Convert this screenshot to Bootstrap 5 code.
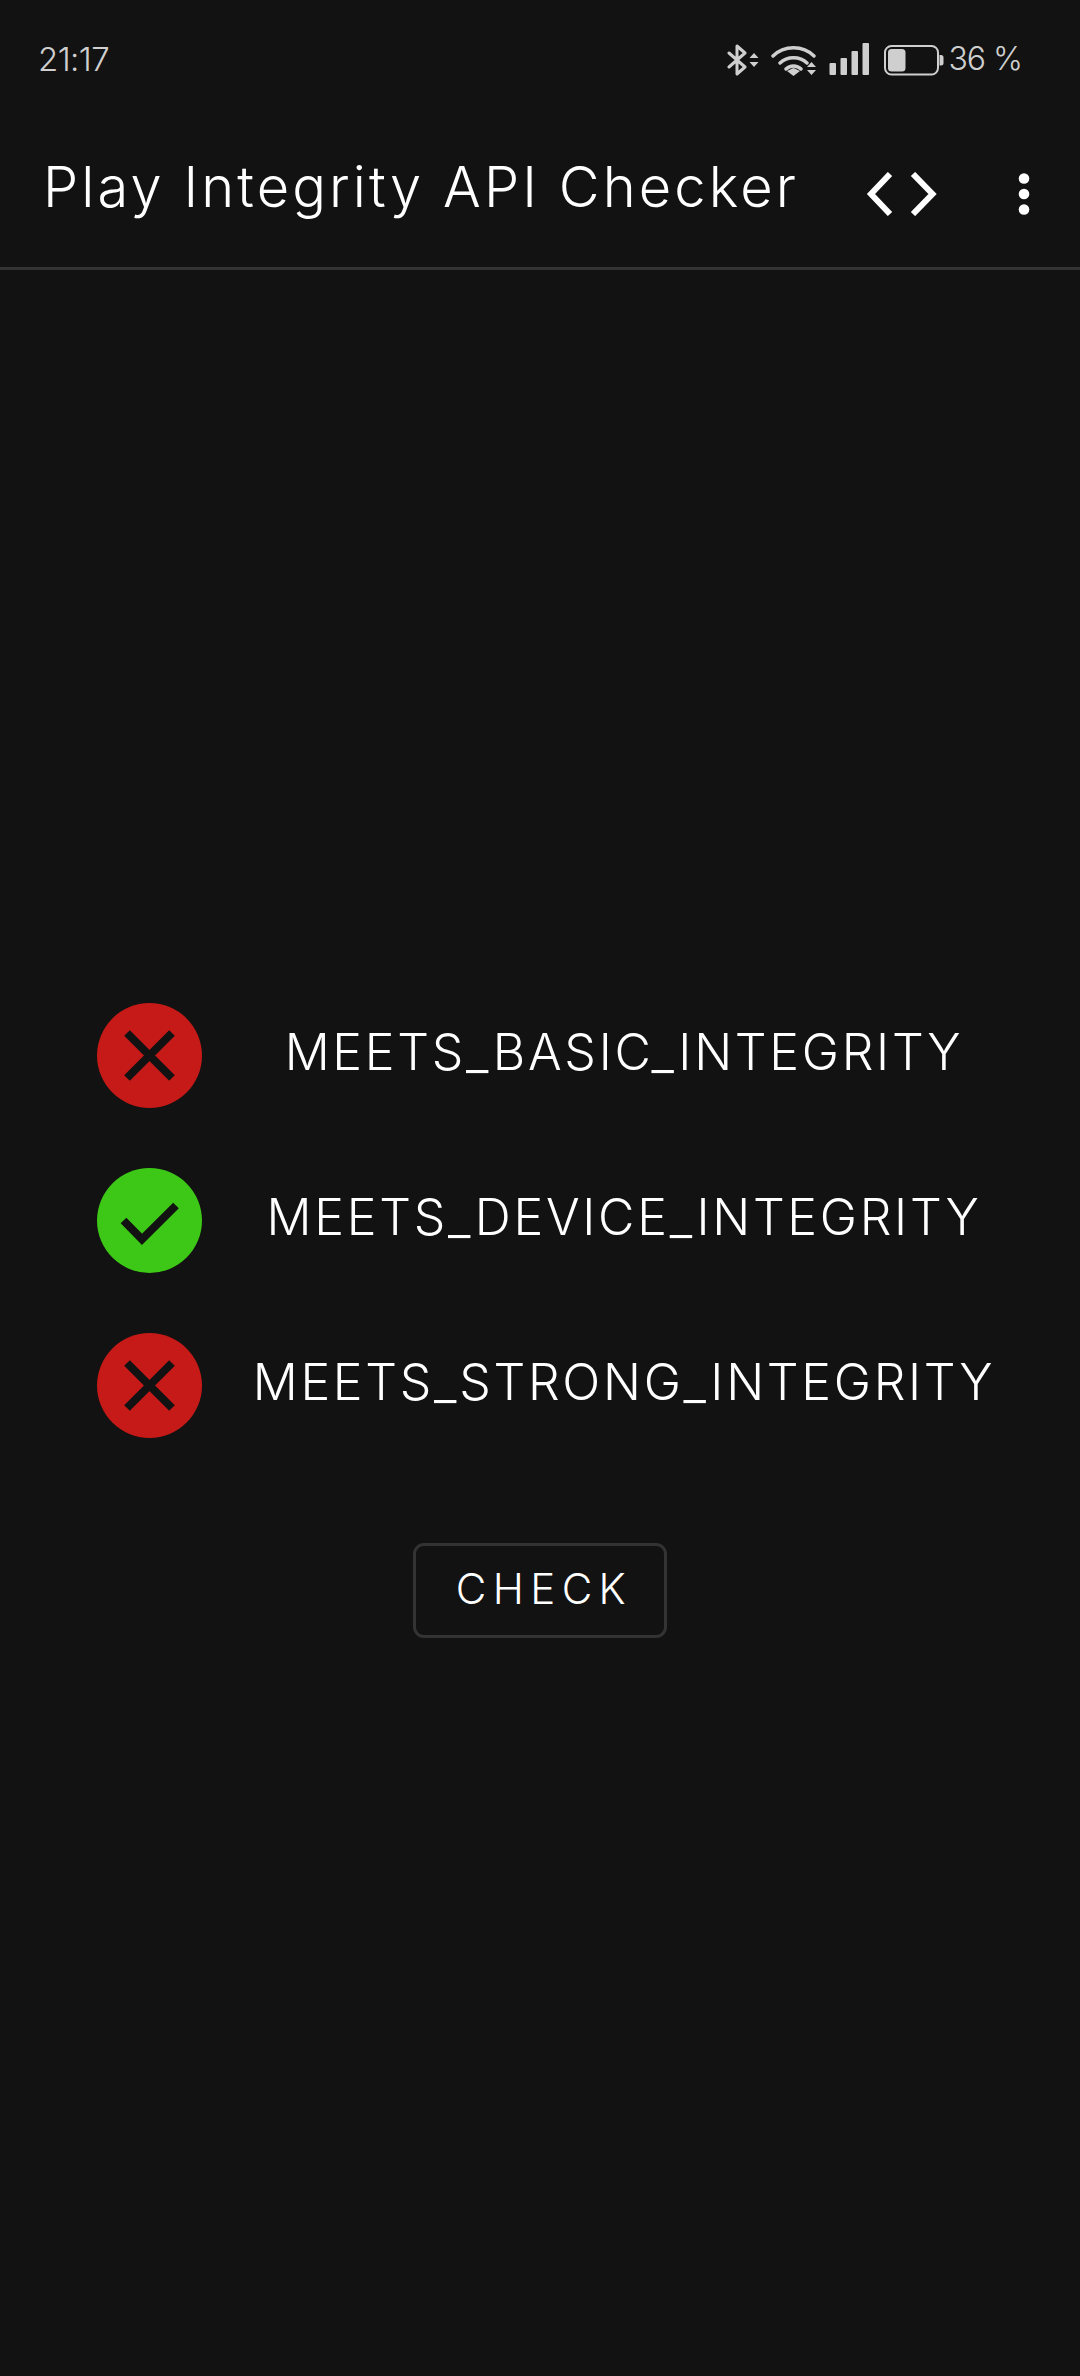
<!DOCTYPE html>
<html lang="en">
<head>
<meta charset="utf-8">
<title>Play Integrity API Checker</title>
<link href="https://cdn.jsdelivr.net/npm/bootstrap@5.3.0/dist/css/bootstrap.min.css" rel="stylesheet">
<style>
html, body { height: 100%; }
body { background: #121212; color: #fff; font-family: Inter, "Noto Sans", sans-serif; font-weight: 300; overflow: hidden; }
.shell { width: 1080px; height: 2376px; }
.statusbar { height: 117px; padding: 43px 58px 0 38px; color: #cfcfcf; }
.clock { font-size: 33px; line-height: 32px; letter-spacing: -.6px; }
.pct { font-size: 32px; line-height: 32px; margin-left: 4px; letter-spacing: -1px; }
.appbar { height: 153px; border-bottom: 3px solid #333; padding: 0 0 0 43px; }
.apptitle { font-size: 56px; line-height: 72px; font-weight: 350; margin: 0; letter-spacing: 3.1px; padding-bottom: 10px; flex-grow: 1; white-space: nowrap; }
.appicons { width: 215px; flex: none; padding-top: 3px; }
.content { padding: 733px 0 0 97px; }
.checkrow { height: 105px; margin-bottom: 60px; }
.roundicon { width: 105px; height: 105px; flex: none; display: block; }
.checklabel { width: 844px; font-size: 50px; font-weight: 350; line-height: 60px; text-align: center; padding-bottom: 8px; white-space: nowrap; letter-spacing: 2.7px; }
.checklabel span { display: inline-block; }
.checkbtn { width: 254px; height: 95px; border: 3px solid #333; border-radius: 11px; background: transparent; color: #fff; font-size: 42px; font-weight: 350; line-height: 1; letter-spacing: 6.4px; padding: 0 0 4px 8px; margin: 45px 0 0 316px; }
.checkbtn:hover { background: transparent; color: #fff; border-color: #333; }
</style>
</head>
<body>
<div class="shell d-flex flex-column">
  <div class="statusbar d-flex align-items-start justify-content-between">
    <span class="clock">21:17</span>
    <div class="d-flex align-items-start">
      <svg width="33" height="33" viewBox="0 0 33 33" fill="none" class="d-block" style="margin-top:1px">
        <path d="M2 9 L18 23 L10 30 V2 L18 9 L2 23" stroke="#cfcfcf" stroke-width="3" stroke-linejoin="round" stroke-linecap="round"/>
        <path d="M22.5 14 L27 9 L31.5 14Z M22.5 18 L27 23 L31.5 18Z" fill="#cfcfcf"/>
      </svg>
      <svg width="46" height="33" viewBox="0 0 46 33" fill="none" class="d-block" style="margin:1px 0 0 11px">
        <path d="M2 12 C13 1 32 1 43 12 M9 19 C16 12 29 12 36 19 M15 25 C19 21 26 21 30 25" stroke="#cfcfcf" stroke-width="3.4" stroke-linecap="round"/>
        <path d="M16 27 L22.5 24 L29 27 L22.5 32Z" fill="#cfcfcf"/>
        <path d="M36 23 L40.5 18 L45 23Z M36 26 L40.5 31 L45 26Z" fill="#cfcfcf"/>
      </svg>
      <svg width="41" height="33" viewBox="0 0 41 33" class="d-block" style="margin-left:12px" fill="#cfcfcf">
        <rect x="0.5" y="20" width="6.5" height="12" rx="1"/>
        <rect x="11.5" y="15" width="6.5" height="17" rx="1"/>
        <rect x="22.5" y="8" width="6.5" height="24" rx="1"/>
        <rect x="33.5" y="0" width="6.5" height="32" rx="1"/>
      </svg>
      <svg width="60" height="33" viewBox="0 0 60 33" fill="none" class="d-block" style="margin:2px 0 0 14px">
        <rect x="1" y="1" width="53" height="28.5" rx="6.5" stroke="#cfcfcf" stroke-width="2"/>
        <rect x="4" y="4" width="17.5" height="22.5" rx="3.5" fill="#cfcfcf"/>
        <path d="M55.5 10 H57 Q59.5 10 59.5 12.5 V18 Q59.5 20.5 57 20.5 H55.5Z" fill="#cfcfcf"/>
      </svg>
      <span class="pct">36 %</span>
    </div>
  </div>
  <header class="appbar d-flex align-items-center">
    <h1 class="apptitle">Play Integrity API Checker</h1>
    <div class="appicons d-flex align-items-center">
      <svg width="74" height="44" viewBox="0 0 74 44" fill="none" class="d-block">
        <path d="M25 2 L6 22 L25 42 M48 2 L67.500 22 L48 42" stroke="#fff" stroke-width="6"/>
      </svg>
      <svg width="12" height="44" viewBox="0 0 12 44" fill="#fff" class="d-block" style="margin-left:79px">
        <circle cx="6" cy="6.5" r="5.3"/><circle cx="6" cy="22" r="5.3"/><circle cx="6" cy="37.5" r="5.3"/>
      </svg>
    </div>
  </header>
  <main class="content d-flex flex-column align-items-start">
    <div class="checkrow d-flex align-items-center">
      <svg class="roundicon" viewBox="0 0 105 105"><circle cx="52.5" cy="52.5" r="52.5" fill="#c51a17"/><path d="M30 30 L75 75 M75 30 L30 75" stroke="#121212" stroke-width="8" fill="none"/></svg>
      <div class="checklabel"><span>MEETS_BASIC_INTEGRITY</span></div>
    </div>
    <div class="checkrow d-flex align-items-center">
      <svg class="roundicon" viewBox="0 0 105 105"><circle cx="52.5" cy="52.5" r="52.5" fill="#3dc717"/><path d="M26.500 52.500 L45 71.300 L79 37.500" stroke="#121212" stroke-width="8" fill="none"/></svg>
      <div class="checklabel"><span>MEETS_DEVICE_INTEGRITY</span></div>
    </div>
    <div class="checkrow d-flex align-items-center">
      <svg class="roundicon" viewBox="0 0 105 105"><circle cx="52.5" cy="52.5" r="52.5" fill="#c51a17"/><path d="M30 30 L75 75 M75 30 L30 75" stroke="#121212" stroke-width="8" fill="none"/></svg>
      <div class="checklabel"><span>MEETS_STRONG_INTEGRITY</span></div>
    </div>
    <button type="button" class="btn checkbtn">CHECK</button>
  </main>
</div>
<script src="https://cdn.jsdelivr.net/npm/bootstrap@5.3.0/dist/js/bootstrap.bundle.min.js"></script>
</body>
</html>
